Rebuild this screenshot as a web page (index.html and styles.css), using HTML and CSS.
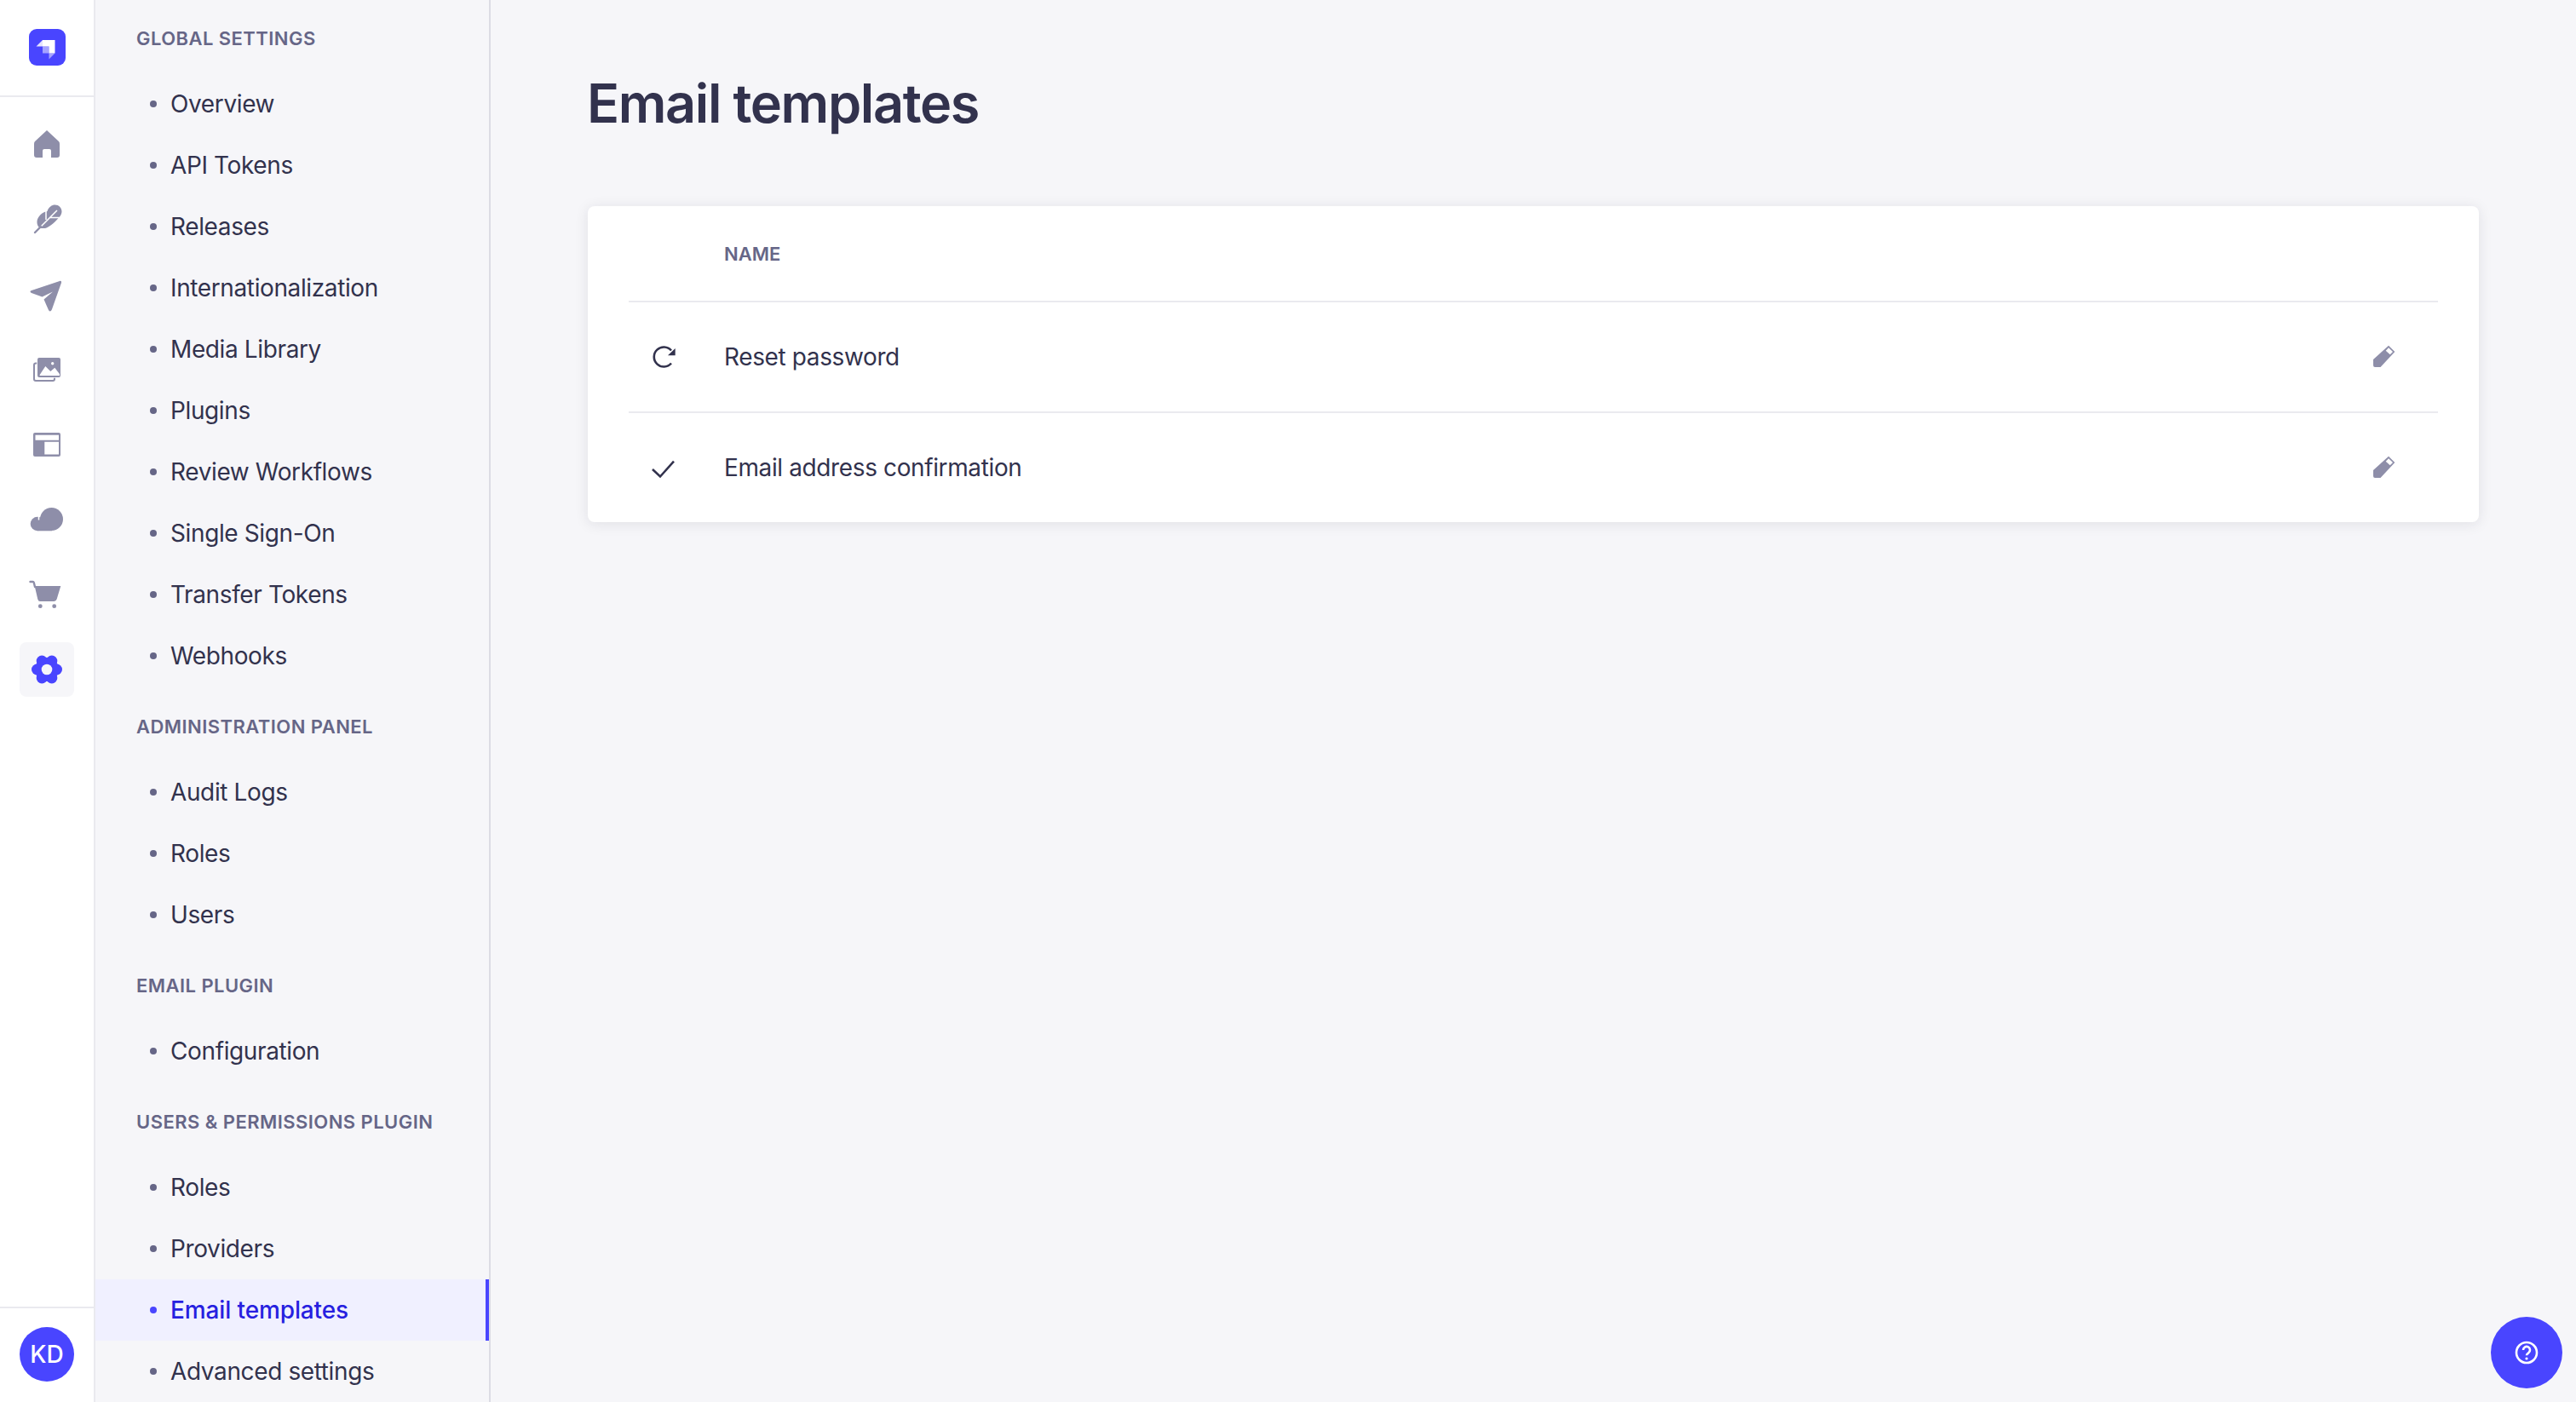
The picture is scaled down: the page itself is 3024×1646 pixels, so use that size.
FILE: index.html
```html
<!DOCTYPE html>
<html lang="en">
<head>
<meta charset="utf-8">
<title>Email templates</title>
<link rel="stylesheet" href="styles.css">
</head>
<body>
<nav class="rail">
  <div class="rail-head">
    <svg class="logo" viewBox="0 0 43 43"><rect width="43" height="43" rx="9" fill="#4945ff"/><path fill="#fff" d="M16 13h14.500v15.500h-7v-8h-7.500z"/><path fill="#fff" opacity=".85" d="M16 13v7.500H8.500z"/><path fill="#fff" opacity=".5" d="M16 20.500h7.500v8H16z"/><path fill="#fff" opacity=".5" d="M23.500 28.500h7l-7 7z"/></svg>
  </div>
  <ul class="rail-list">
    <li class="rail-item"><svg class="rail-icon" viewBox="0 0 48 48"><path d="M24 7 38 20q1 1 1 3v13q0 3-3 3h-7v-8q0-2-2-2h-6q-2 0-2 2v8h-7q-3 0-3-3V23q0-2 1-3z"/></svg></li>
    <li class="rail-item"><svg class="rail-icon" viewBox="0 0 48 48"><path d="M21 15l3.500-1c1.500-5 5.500-7.500 9-7.500 4.500 0 8 3.500 8 8 0 2.500-1.500 5-3.500 7-5 6.500-12 11.500-16 12.500h-6l-2-2c-3-5-2-12 7-17z"/><path class="cut" d="M16 33 36 13M38.500 21.500H28M23 13v11"/><path class="stem" d="M10 39 17 32"/></svg></li>
    <li class="rail-item"><svg class="rail-icon" viewBox="0 0 48 48"><path d="M39 8c1.500-.5 2.500.5 2 2L30 41c-1 3-3 3-4 1l-5.500-12.500L31 20.500 18.500 26.500 6 22c-2-1-2-2.500 0-3z"/></svg></li>
    <li class="rail-item"><svg class="rail-icon" viewBox="0 0 48 48"><rect class="frame" x="9" y="16.500" width="24" height="20.500" rx="2"/><rect class="front" x="13" y="10" width="27" height="23" rx="2"/><path class="cut-fill" d="M15.700 30 22.300 20l6 6 5-4.300 5.700 7.600V31H15.700z"/><circle class="cut-fill" cx="30.700" cy="16.700" r="1.700"/></svg></li>
    <li class="rail-item"><svg class="rail-icon" viewBox="0 0 48 48"><rect x="8" y="10" width="32" height="28" rx="2"/><path class="cut-fill" d="M10.500 12.700h27.500v6H10.500zM21.300 20.700H38v14.800H21.300z"/></svg></li>
    <li class="rail-item"><svg class="rail-icon" viewBox="0 0 48 48"><circle cx="29.500" cy="23.500" r="13.500"/><circle cx="13" cy="29" r="8.300"/><path d="M13 24h17v13.300H13z"/><path class="cut" d="M14.500 18v6.500"/></svg></li>
    <li class="rail-item"><svg class="rail-icon" viewBox="0 0 48 48"><path d="M9.700 14h30.600l-4.600 15.300q-.8 2.700-3 2.700H16q-2 0-2.700-2.500z"/><path class="stem" d="M4.500 9h3q1 0 1.300 1l1.200 5"/><circle cx="16.300" cy="37.700" r="2.400"/><circle cx="32.700" cy="37.700" r="2.400"/></svg></li>
    <li class="rail-item rail-item-active"><svg class="rail-icon rail-icon-active" viewBox="0 0 48 48"><circle cx="35.500" cy="24" r="6.500"/><circle cx="29.800" cy="14" r="6.500"/><circle cx="18.200" cy="14" r="6.500"/><circle cx="12.500" cy="24" r="6.500"/><circle cx="18.200" cy="34" r="6.500"/><circle cx="29.800" cy="34" r="6.500"/><circle cx="24" cy="24" r="14"/><circle class="hole" cx="24" cy="24" r="6.300"/></svg></li>
  </ul>
  <div class="rail-foot"><span class="avatar">KD</span></div>
</nav>

<aside class="subnav">
  <div class="subnav-scroll">
    <h3 class="group-title">Global Settings</h3>
    <ul class="group">
      <li class="link">Overview</li>
      <li class="link">API Tokens</li>
      <li class="link">Releases</li>
      <li class="link">Internationalization</li>
      <li class="link">Media Library</li>
      <li class="link">Plugins</li>
      <li class="link">Review Workflows</li>
      <li class="link">Single Sign-On</li>
      <li class="link">Transfer Tokens</li>
      <li class="link">Webhooks</li>
    </ul>
    <h3 class="group-title">Administration Panel</h3>
    <ul class="group">
      <li class="link">Audit Logs</li>
      <li class="link">Roles</li>
      <li class="link">Users</li>
    </ul>
    <h3 class="group-title">Email Plugin</h3>
    <ul class="group">
      <li class="link">Configuration</li>
    </ul>
    <h3 class="group-title">Users &amp; Permissions Plugin</h3>
    <ul class="group">
      <li class="link">Roles</li>
      <li class="link">Providers</li>
      <li class="link link-active">Email templates</li>
      <li class="link">Advanced settings</li>
    </ul>
  </div>
</aside>

<main class="main">
  <h1 class="title">Email templates</h1>
  <section class="card">
    <div class="row row-head">
      <span></span>
      <span class="col-name">Name</span>
      <span></span>
    </div>
    <div class="row">
      <svg class="status-icon" viewBox="0 0 32 32"><path d="M25 8.500A11.500 11.500 0 1 0 25 23.500"/><path class="arrow" d="M29.700 6v8.300H21z"/></svg>
      <span class="cell">Reset password</span>
      <svg class="edit-icon" viewBox="0 0 32 32"><path fill-rule="evenodd" d="M3 19 21 2.700 28.300 10 11.500 28H5q-2 0-2-2zM17.700 8.700 22.700 13.300 26 10 21 5.300z"/></svg>
    </div>
    <div class="row">
      <svg class="status-icon" viewBox="0 0 32 32"><path d="M3 18l9 8.500L28 8.700"/></svg>
      <span class="cell">Email address confirmation</span>
      <svg class="edit-icon" viewBox="0 0 32 32"><path fill-rule="evenodd" d="M3 19 21 2.700 28.300 10 11.500 28H5q-2 0-2-2zM17.700 8.700 22.700 13.300 26 10 21 5.300z"/></svg>
    </div>
  </section>
</main>

<button class="help" type="button" aria-label="Help">
  <svg viewBox="0 0 32 32"><circle cx="16" cy="16" r="12"/><path d="M12 13a4 4 0 1 1 6.200 3.300c-1.400.9-2.200 1.500-2.200 3"/><circle class="dot" cx="16" cy="23" r="1.600"/></svg>
</button>
</body>
</html>
```
FILE: styles.css
```css
* { box-sizing: border-box; }

html, body {
  height: 100%;
  margin: 0;
  overflow: hidden;
}

body {
  display: flex;
  background: #f6f6f9;
  color: #32324d;
  font-family: Inter, "Liberation Sans", sans-serif;
}

ul { list-style: none; margin: 0; padding: 0; }

/* Icon rail */
.rail {
  display: flex;
  flex-direction: column;
  flex: 0 0 112px;
  background: #fff;
  border-right: 2px solid #eaeaef;
}

.rail-head {
  height: 114px;
  padding: 34px 0 0 34px;
  border-bottom: 2px solid #eaeaef;
}

.logo { display: block; width: 43px; height: 43px; }

.rail-list {
  display: flex;
  flex-direction: column;
  align-items: center;
  gap: 24px;
  padding-top: 24px;
}

.rail-item {
  display: flex;
  align-items: center;
  justify-content: center;
  width: 64px;
  height: 64px;
  border-radius: 8px;
}

.rail-item-active { background: #f6f6f9; }

.rail-icon { width: 48px; height: 48px; fill: #8e8ea9; }
.rail-icon-active { fill: #4945ff; }
.rail-icon .hole { fill: #f6f6f9; }
.rail-icon .cut { fill: none; stroke: #fff; stroke-width: 1.500; }
.rail-icon .cut-fill { fill: #fff; }
.rail-icon .stem { fill: none; stroke: #8e8ea9; stroke-width: 2.400; stroke-linecap: round; }
.rail-icon .frame { fill: none; stroke: #8e8ea9; stroke-width: 2; }
.rail-icon .front { stroke: #fff; stroke-width: 1.500; paint-order: stroke; }

.rail-foot {
  display: flex;
  justify-content: center;
  height: 112px;
  margin-top: auto;
  padding-top: 22px;
  border-top: 2px solid #eaeaef;
}

.avatar {
  display: flex;
  align-items: center;
  justify-content: center;
  width: 64px;
  height: 64px;
  border-radius: 50%;
  background: #4945ff;
  color: #fff;
  font-size: 28px;
  font-weight: 500;
}

/* Settings sub navigation */
.subnav {
  flex: 0 0 464px;
  overflow: hidden;
  border-right: 2px solid #dcdce4;
}

.subnav-scroll { margin-top: -2px; }

.group-title {
  height: 88px;
  margin: 0;
  padding: 34px 0 0 48px;
  color: #666687;
  font-size: 22px;
  font-weight: 600;
  letter-spacing: .45px;
  line-height: 26px;
  text-transform: uppercase;
}

.link {
  display: flex;
  align-items: center;
  gap: 16px;
  height: 72px;
  padding-left: 64px;
  font-size: 28px;
  letter-spacing: -.38px;
}

.link::before {
  content: "";
  flex: none;
  width: 8px;
  height: 8px;
  border-radius: 50%;
  background: #666687;
}

.link-active {
  border-right: 4px solid #4945ff;
  background: #f0f0ff;
  color: #271fe0;
  font-weight: 500;
  letter-spacing: -.12px;
}

.link-active::before { background: #4945ff; }

/* Main */
.main {
  flex: 1;
  min-width: 0;
  padding: 80px 114px 0;
}

.title {
  margin: 0 0 80px -1px;
  font-size: 63px;
  font-weight: 600;
  letter-spacing: -1.4px;
  line-height: 82px;
}

.card {
  padding: 0 48px;
  border-radius: 8px;
  background: #fff;
  box-shadow: 0 2px 16px rgba(33, 33, 52, .1);
}

.row {
  display: grid;
  grid-template-columns: 112px 1fr auto;
  align-items: center;
  height: 130px;
  padding-right: 47px;
  border-bottom: 2px solid #eaeaef;
}

.row:last-child { height: 128px; border-bottom: 0; }

.row-head { height: 113px; }

.col-name {
  color: #666687;
  font-size: 22px;
  font-weight: 600;
  text-transform: uppercase;
}

.cell { font-size: 28px; letter-spacing: -.38px; }

.status-icon {
  width: 32px;
  height: 32px;
  margin-left: 25px;
  fill: none;
  stroke: #32324d;
  stroke-width: 2.600;
}

.status-icon .arrow { fill: #32324d; stroke: none; }

.edit-icon { width: 32px; height: 32px; fill: #8e8ea9; }

/* Help */
.help {
  position: fixed;
  right: 16px;
  bottom: 16px;
  display: flex;
  align-items: center;
  justify-content: center;
  width: 84px;
  height: 84px;
  padding: 0;
  border: 0;
  border-radius: 50%;
  background: #4945ff;
}

.help svg { width: 32px; height: 32px; fill: none; stroke: #fff; stroke-width: 2.600; }
.help .dot { fill: #fff; stroke: none; }
```
